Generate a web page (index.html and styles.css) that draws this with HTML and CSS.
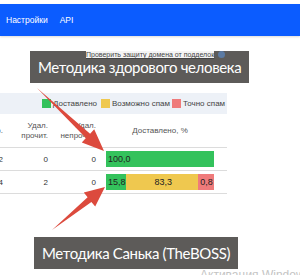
FILE: index.html
```html
<!DOCTYPE html>
<html lang="ru">

<head>
    <meta charset="UTF-8">
    <meta name="viewport" content="width=device-width, initial-scale=1.0">
    <title>Статистика рассылок</title>
    <link rel="stylesheet" href="styles.css">
</head>

<body>
    <div class="topbar">
        <a href="#">Настройки</a>
        <a href="#">API</a>
    </div>

    <div class="domain-check">
        <a href="#">Проверить защиту домена от подделок</a>
        <span class="help-icon"></span>
    </div>

    <!-- Legend -->
    <div class="legend">
        <div class="legend-item legend-ok"><span class="swatch ok"></span>Доставлено</div>
        <div class="legend-item legend-maybe"><span class="swatch maybe"></span>Возможно спам</div>
        <div class="legend-item"><span class="swatch spam"></span>Точно спам</div>
    </div>

    <!-- Stats table -->
    <div class="stats">
        <div class="stats-row stats-head">
            <div class="cell num">Отпр.</div>
            <div class="cell num">Удал.<br>прочит.</div>
            <div class="cell num">Удал.<br>непрочит.</div>
            <div class="cell bar-cell title">Доставлено, %</div>
        </div>
        <div class="stats-row">
            <div class="cell num">2</div>
            <div class="cell num">0</div>
            <div class="cell num">0</div>
            <div class="cell bar-cell">
                <div class="bar">
                    <span class="part ok" style="width: 118px">100,0</span>
                </div>
            </div>
        </div>
        <div class="stats-row">
            <div class="cell num">4</div>
            <div class="cell num">2</div>
            <div class="cell num">0</div>
            <div class="cell bar-cell">
                <div class="bar">
                    <span class="part ok" style="width: 22px">15,8</span>
                    <span class="part maybe" style="width: 79px">83,3</span>
                    <span class="part spam" style="width: 17px">0,8</span>
                </div>
            </div>
        </div>
    </div>

    <!-- Annotations drawn over the screenshot -->
    <svg class="arrows" width="300" height="275" viewBox="0 0 300 275">
        <polygon points="37,88 90.1,133.7 94.2,129.3 104,151 81.8,142.5 85.9,138.1" />
        <polygon points="52,230 91.4,201.9 95.2,206.6 105,187 83.8,192.6 87.6,197.3" />
    </svg>
    <div class="note note-top">Методика здорового человека</div>
    <div class="note note-bottom">Методика Санька (TheBOSS)</div>

    <div class="watermark">Активация Windows</div>
</body>

</html>
```

FILE: styles.css
```css
body {
    margin: 0;
    width: 300px;
    height: 275px;
    overflow: hidden;
    position: relative;
    background: white;
    font-family: "Liberation Sans", Arial, sans-serif;
    color: #333;
}

.topbar {
    margin-top: 4px;
    height: 32px;
    background-color: #0b5cff;
    display: flex;
    align-items: center;
    gap: 12px;
    padding-left: 6px;
    box-shadow: 0 1px 2px rgba(0, 0, 0, 0.15);
}

.topbar a {
    color: white;
    text-decoration: none;
    font-size: 8.5px;
}

.domain-check {
    position: relative;
    z-index: 3;
    display: flex;
    align-items: center;
    margin-top: 15px;
    padding-left: 86px;
    height: 8px;
}

.domain-check a {
    font-size: 7px;
    line-height: 8px;
    color: #444;
    background: #f4f4f4;
}

.help-icon {
    width: 7px;
    height: 7px;
    border-radius: 50%;
    background: #5b7aa3;
    margin-left: 4px;
    margin-top: -2px;
}

.legend {
    margin-top: 34px;
    width: 227px;
    height: 21px;
    background: #edf1f7;
    display: flex;
    align-items: center;
    padding-left: 42px;
    box-sizing: border-box;
    font-size: 8px;
    color: #444;
}

.legend-item {
    display: flex;
    align-items: center;
}

.legend-ok {
    width: 59px;
}

.legend-maybe {
    width: 71px;
}

.swatch {
    width: 9px;
    height: 9px;
    margin-right: 2px;
}

.ok {
    background: #34c25c;
}

.maybe {
    background: #efc84f;
}

.spam {
    background: #ef7b7b;
}

.stats {
    width: 227px;
    font-size: 8px;
}

.stats-row {
    display: grid;
    grid-template-columns: 3px 45px 48px 118px;
    align-items: center;
    height: 22px;
    border-top: 1px solid #dcdcdc;
}

.stats-row:last-child {
    border-bottom: 1px solid #dcdcdc;
}

.stats-head {
    height: 33px;
    border-top: none;
    color: #555;
    line-height: 10px;
}

.cell.num {
    display: flex;
    justify-content: flex-end;
    text-align: right;
    white-space: nowrap;
}

.bar-cell {
    margin-left: 10px;
}

.bar-cell.title {
    text-align: center;
}

.bar {
    display: flex;
    height: 16px;
    font-size: 9px;
    color: #222;
}

.part {
    display: flex;
    align-items: center;
    padding-left: 2px;
    box-sizing: border-box;
    overflow: hidden;
}

.part.maybe {
    justify-content: center;
}

.arrows {
    position: absolute;
    top: 0;
    left: 0;
    z-index: 1;
}

.arrows polygon {
    fill: #dc4a3d;
}

.note {
    position: absolute;
    z-index: 2;
    background: #5d5b59;
    color: white;
    font-family: Lato, "Open Sans", sans-serif;
    font-size: 15px;
    letter-spacing: -0.35px;
    height: 32px;
    line-height: 32px;
    padding: 0 8px;
    white-space: nowrap;
}

.note-top {
    left: 30px;
    top: 51px;
}

.note-bottom {
    left: 34px;
    top: 237px;
}

.watermark {
    position: absolute;
    left: 200px;
    top: 268px;
    font-size: 12px;
    color: #c4c4c4;
    white-space: nowrap;
}
```
